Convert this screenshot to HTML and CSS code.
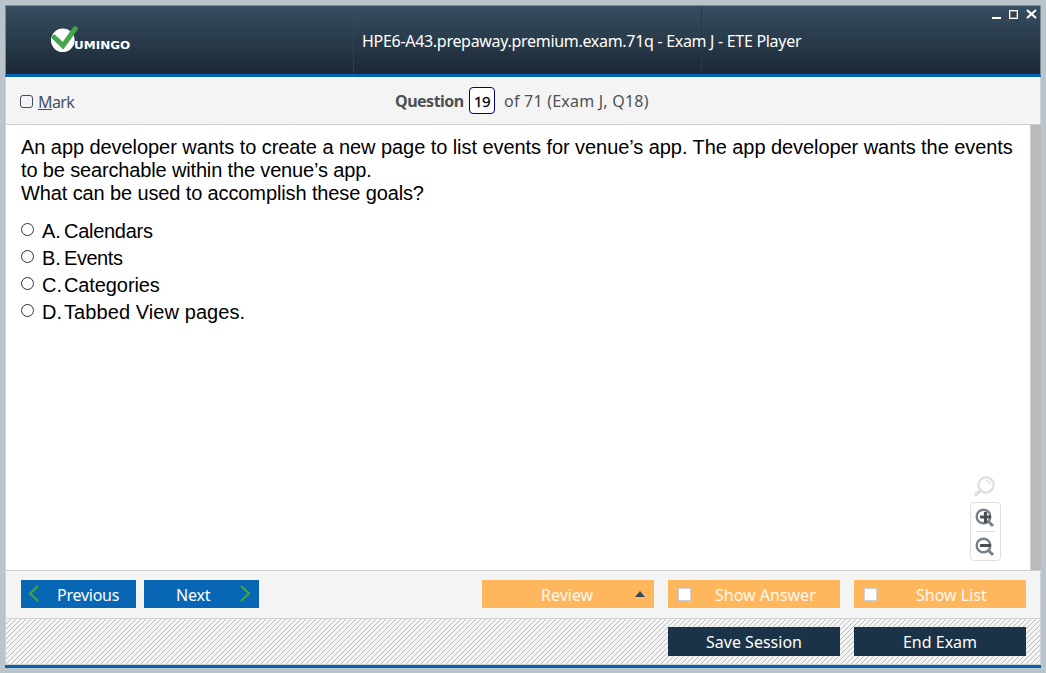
FILE: index.html
```html
<!DOCTYPE html>
<html lang="en">
<head>
<meta charset="utf-8">
<title>ETE Player</title>
<link rel="stylesheet" href="styles.css">
</head>
<body>
<div class="window">
  <header class="titlebar">
    <div class="brand">
      <svg class="logo" width="30" height="30" viewBox="0 0 30 30">
        <circle cx="12.8" cy="15.3" r="11.8" fill="#fff"/>
        <path d="M4.2 12.2 L13 20.6 L25.2 3.8" fill="none" stroke="#44a649" stroke-width="5" stroke-linecap="round" stroke-linejoin="miter"/>
      </svg>
      <span class="brand-name">UMINGO</span>
    </div>
    <div class="title"><span>HPE6-A43.prepaway.premium.exam.71q - Exam J - ETE Player</span></div>
    <div class="controls">
      <svg width="46" height="12" viewBox="0 0 46 12">
        <path d="M1 9h9v2H1z" fill="#fff"/>
        <rect x="18.5" y="2.5" width="8" height="8" fill="#33414d" stroke="#fff"/>
        <rect x="19.5" y="3.5" width="6" height="6" fill="none" stroke="#8a8a85"/>
        <path d="M36 2l9 8M45 2l-9 8" stroke="#fff" stroke-width="2.2"/>
      </svg>
    </div>
  </header>
  <section class="infobar">
    <label class="mark"><i class="markbox"></i><span><u>M</u>ark</span></label>
    <div class="counter"><b>Question</b><span class="number">19</span><span class="total">of 71 (Exam J, Q18)</span></div>
  </section>
  <main class="content">
    <div class="page">
      <div class="question">
        <div><span class="q1">An app developer wants to create a new page to list events for venue’s app. The app developer wants the events</span></div>
        <div><span class="q2">to be searchable within the venue’s app.</span></div>
        <div><span class="q3">What can be used to accomplish these goals?</span></div>
      </div>
      <div class="answers">
        <label class="answer"><i class="radio"></i><span class="letter">A.</span><span class="tight">Calendars</span></label>
        <label class="answer"><i class="radio"></i><span class="letter">B.</span><span class="tighter">Events</span></label>
        <label class="answer"><i class="radio"></i><span class="letter">C.</span><span class="snug">Categories</span></label>
        <label class="answer"><i class="radio"></i><span class="letter">D.</span><span class="loose">Tabbed View pages.</span></label>
      </div>
      <div class="zoomer">
        <svg width="22" height="22" viewBox="0 0 22 22" fill="none" stroke="#dedede">
          <circle cx="13" cy="9" r="7.6" stroke-width="2.2"/>
          <path d="M13 5a4 4 0 0 1 4 4" stroke-width="1.5"/>
          <path d="M7.5 14.5L3 18.5" stroke-width="3.6" stroke-linecap="round"/>
        </svg>
        <div class="zoombox">
          <svg width="20" height="20" viewBox="0 0 20 20" fill="none">
            <circle cx="8.5" cy="8.5" r="6.8" stroke="#75828c" stroke-width="2.4"/>
            <path d="M13.5 13.5L18 18" stroke="#75828c" stroke-width="3"/>
            <path d="M5 9h11M10.5 4v11" stroke="#4d4d4d" stroke-width="3.2"/>
          </svg>
          <hr>
          <svg width="20" height="20" viewBox="0 0 20 20" fill="none">
            <circle cx="8.5" cy="8.5" r="6.8" stroke="#75828c" stroke-width="2.4"/>
            <path d="M13.5 13.5L18 18" stroke="#75828c" stroke-width="3"/>
            <path d="M5 8.5h11" stroke="#4d4d4d" stroke-width="3"/>
          </svg>
        </div>
      </div>
    </div>
    <div class="scrollbar"></div>
  </main>
  <section class="actions">
    <button class="btn nav prev"><svg width="11" height="17" viewBox="0 0 11 17"><path d="M10 1L2 8.5L10 16" fill="none" stroke="#44a649" stroke-width="2"/></svg><span>Previous</span></button>
    <button class="btn nav next"><span>Next</span><svg width="11" height="17" viewBox="0 0 11 17"><path d="M1 1L9 8.5L1 16" fill="none" stroke="#44a649" stroke-width="2"/></svg></button>
    <button class="btn option review"><span>Review</span><i class="arrow"></i></button>
    <button class="btn option"><i class="check"></i><span class="answer-label">Show Answer</span></button>
    <button class="btn option"><i class="check"></i><span class="list-label">Show List</span></button>
  </section>
  <footer class="session">
    <svg class="hatch" width="1034" height="45">
      <defs><pattern id="lines" width="5" height="5" patternUnits="userSpaceOnUse"><path d="M0 4h1v1H0zM1 3h1v1H1zM2 2h1v1H2zM3 1h1v1H3zM4 0h1v1H4z" fill="#bdbdbd" shape-rendering="crispEdges"/></pattern></defs>
      <rect width="1034" height="45" fill="url(#lines)"/>
    </svg>
    <button class="btn dark"><span>Save Session</span></button>
    <button class="btn dark"><span>End Exam</span></button>
  </footer>
</div>
</body>
</html>
```
FILE: styles.css
```css
* { box-sizing: border-box; }
body { margin: 0; width: 1046px; height: 673px; padding: 5px; background: #b9c5cb; overflow: hidden; }
.window { width: 1036px; height: 663px; display: flex; flex-direction: column; background: #f4f4f4; border-bottom: 3px solid #0464b4; white-space: nowrap; }
.titlebar { height: 72px; display: grid; grid-template-columns: 347px 349px 1fr; background: linear-gradient(#374e61, #1b2835); border: 1px solid #7e8d94; border-bottom: 3px solid #0464b4; color: #fff; }
.brand { display: flex; padding: 19px 0 0 44px; }
.logo { flex: none; }
.brand-name { font: bold 10px/14px "DejaVu Sans", sans-serif; margin: 14px 0 0 -6px; transform: scaleX(1.2); transform-origin: left; }
.title { border-left: 1px dotted #354880; border-right: 1px solid #2a3948; padding: 23px 0 0 8px; font: 16px/24px "Noto Sans", sans-serif; letter-spacing: -0.3px; }
.controls { display: flex; justify-content: flex-end; padding: 2px 3px 0 0; }
.infobar { height: 48px; display: flex; border: 1px solid #d0d0d0; border-top: 0; font: 16px/24px "Noto Sans", sans-serif; color: #4d5154; }
.mark { display: flex; width: 375px; padding: 13px 0 0 14px; color: #44525f; letter-spacing: -0.6px; }
.markbox { width: 13px; height: 13px; margin: 5px 5px 0 0; border: 1px solid #3d4f5d; border-radius: 3px; }
.counter { display: flex; padding: 10px 0 0 14px; line-height: 28px; }
.counter b { width: 69px; letter-spacing: -0.5px; }
.number { width: 26px; height: 27px; margin: 0 9px 0 5px; border: 1px solid #000080; border-radius: 4px; background: #fff; color: #000; text-align: center; font-size: 15px; line-height: 27px; letter-spacing: -0.6px; -webkit-text-stroke: 0.3px #000; }
.total { letter-spacing: 0.22px; }
.content { height: 446px; display: flex; background: #fff; border-bottom: 1px solid #d0d0d0; }
.page { flex: 1; position: relative; padding: 11px 0 0 15px; border-left: 1px solid #d0d0d0; border-right: 1px solid #d0d0d0; color: #000; font: 20px/23px "Liberation Sans", Arial, sans-serif; }
.q1 { letter-spacing: -0.064px; }
.q2 { letter-spacing: -0.15px; }
.q3 { letter-spacing: -0.12px; }
.tight { letter-spacing: -0.28px; }
.tighter { letter-spacing: -0.45px; }
.snug { letter-spacing: -0.1px; }
.loose { letter-spacing: 0.08px; }
.scrollbar { width: 10px; background: #bbbab6; }
.answers { margin-top: 12px; }
.answer { display: flex; height: 27px; line-height: 29px; }
.radio { width: 13px; height: 13px; margin: 6px 8px 0 0; border: 1px solid #333; border-radius: 50%; }
.letter { width: 22px; }
.zoomer { position: absolute; right: 29px; bottom: 9px; width: 31px; }
.zoomer > svg { display: block; margin: 0 0 4px 3px; }
.zoombox { height: 59px; border: 1px solid #dfdfdf; border-radius: 4px; padding: 5px 4px; }
.zoombox svg { display: block; margin-left: 0; }
.zoombox hr { border: 0; height: 1px; margin: 3px 1px 5px; background: #dedede; }
.actions { height: 47px; display: flex; margin-top: 1px; padding: 8px 14px 0 15px; border: 1px solid #d0d0d0; border-top: 0; }
.btn { display: flex; border: 0; padding: 0; height: 28px; color: #fff; font: 16px/30px "Noto Sans", sans-serif; white-space: nowrap; }
.nav { width: 115px; background: #0867b5; margin-right: 8px; }
.prev svg { margin: 5px 18px 0 7px; }
.prev span { letter-spacing: -0.25px; }
.next span { margin-left: 32px; width: 64px; text-align: left; letter-spacing: -0.2px; }
.next svg { margin-top: 5px; }
.option { width: 172px; background: #ffb75d; margin-left: 14px; color: #fff8ef; }
.review { margin-left: auto; }
.review span { margin-left: 59px; width: 94px; text-align: left; }
.arrow { align-self: flex-start; margin-top: 11px; border: 5px solid transparent; border-bottom: 6px solid #34495b; border-top: 0; }
.check { width: 13px; height: 13px; margin: 8px 0 0 10px; background: #fff; border: 1px solid #d0d0d0; }
.answer-label { margin-left: 24px; }
.list-label { margin-left: 39px; }
.session { flex: 1; position: relative; display: flex; justify-content: flex-end; gap: 14px; padding: 8px 14px 0 0; border: 1px solid #d0d0d0; border-top: 0; }
.hatch { position: absolute; left: 0; top: 0; }
.dark { position: relative; width: 172px; height: 29px; justify-content: center; background: #1b3348; }
```
